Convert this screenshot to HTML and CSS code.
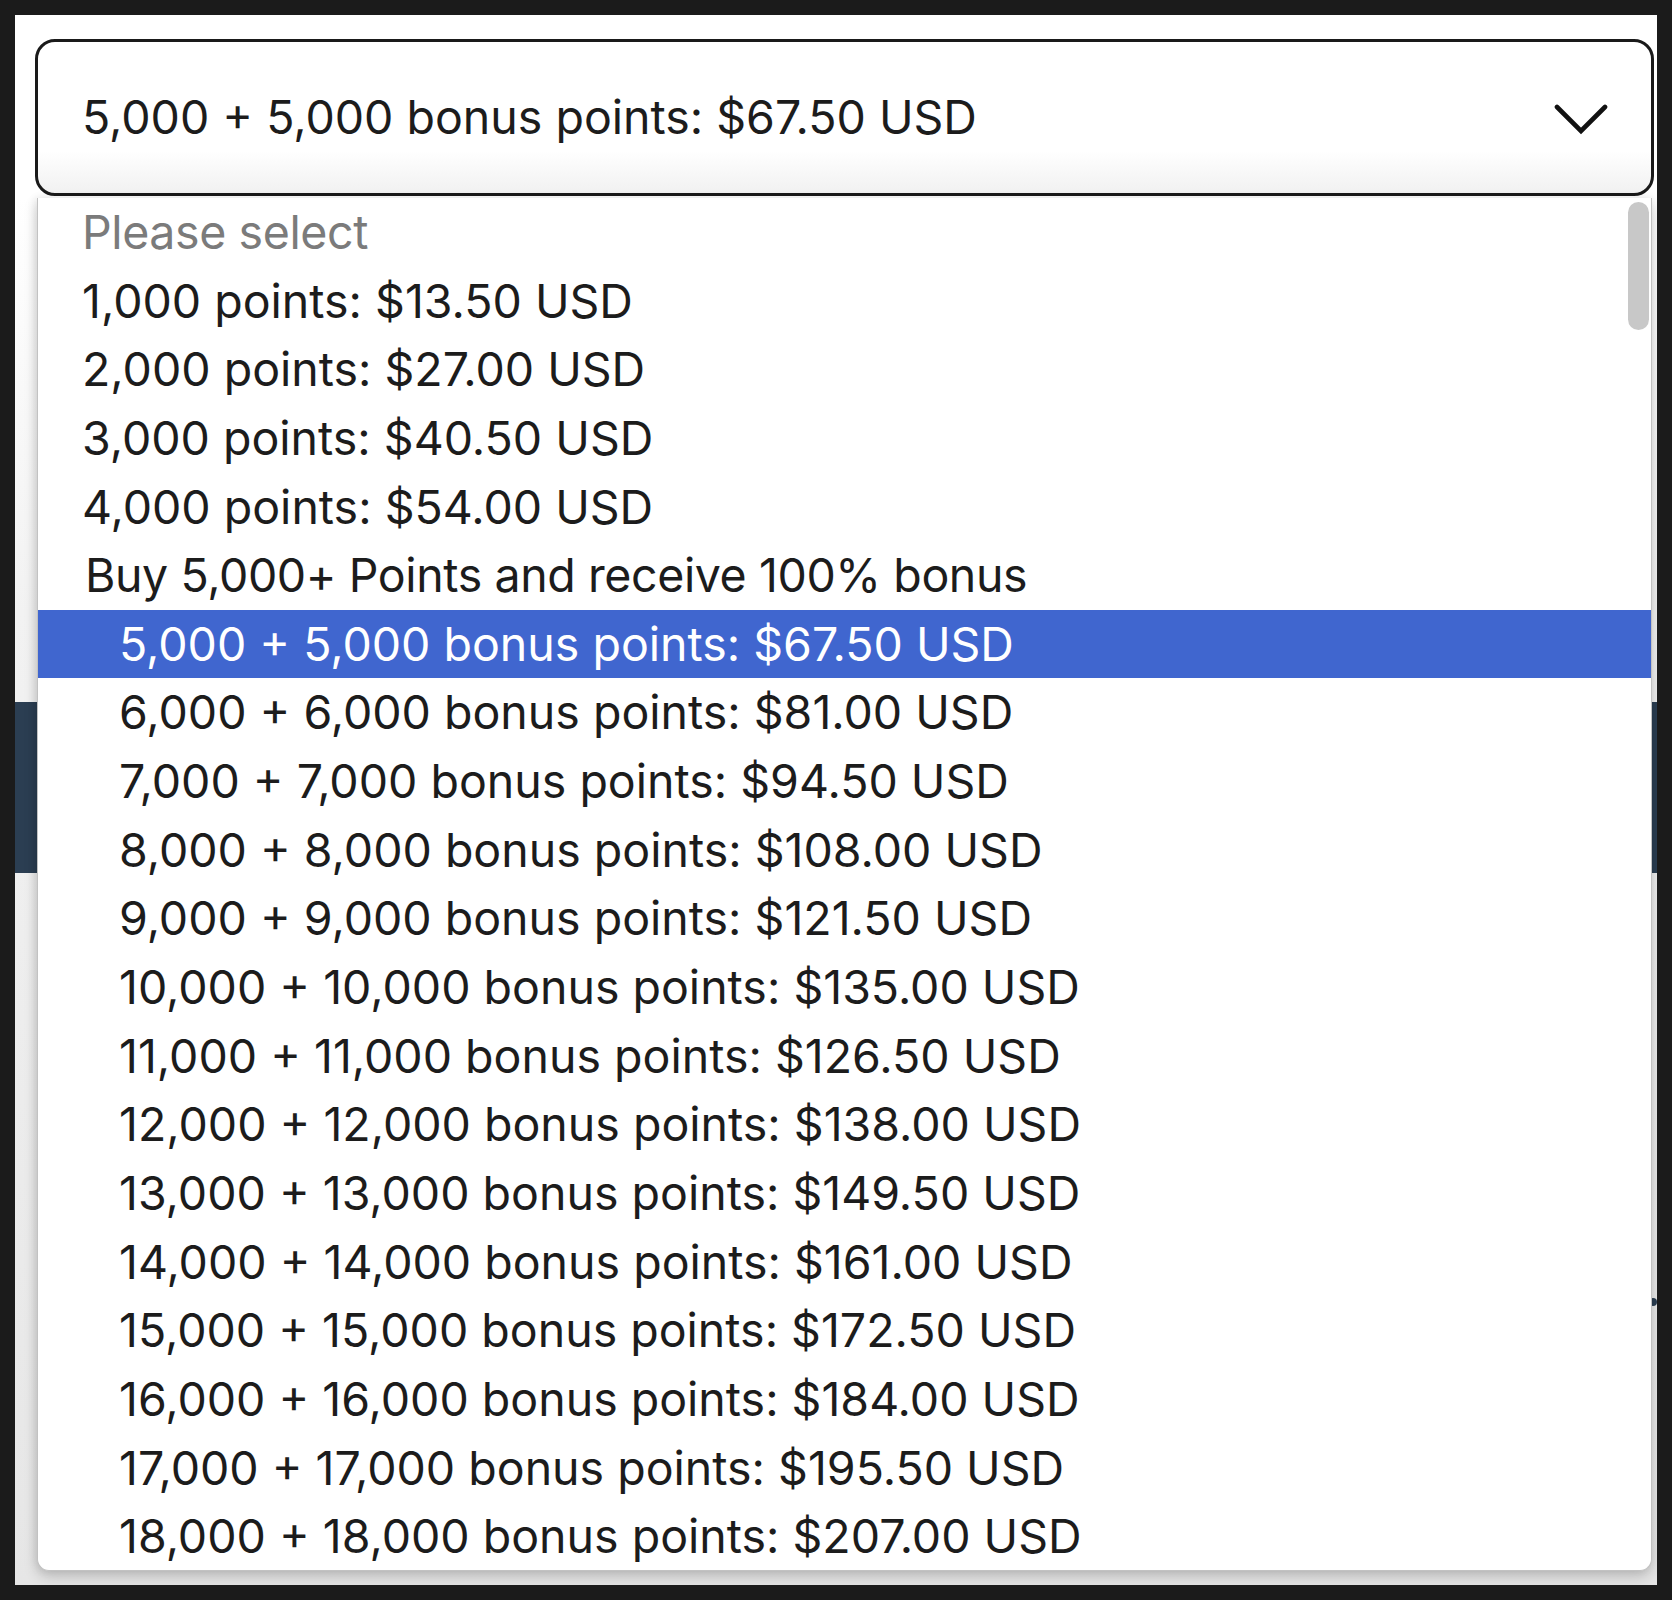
FILE: index.html
```html
<!DOCTYPE html>
<html lang="en">
<head>
<meta charset="utf-8">
<title>Points selector</title>
<link rel="stylesheet" href="styles.css">
</head>
<body>
<div class="frame">
  <div class="page">
    <div class="select-box">
      <span class="select-value">5,000 + 5,000 bonus points: $67.50 USD</span>
      <svg class="chevron" width="54" height="32" viewBox="0 0 54 32" aria-hidden="true">
        <polyline points="3,4 27,28 51,4" fill="none" stroke="#111" stroke-width="4.6" stroke-linecap="round" stroke-linejoin="miter"/>
      </svg>
    </div>
    <div class="under">
      <div class="band"></div>
      <div class="under-rest">
        <span class="dot"></span>
      </div>
    </div>

    <div class="menu">
      <div class="opt placeholder">Please select</div>
      <div class="opt">1,000 points: $13.50 USD</div>
      <div class="opt">2,000 points: $27.00 USD</div>
      <div class="opt">3,000 points: $40.50 USD</div>
      <div class="opt">4,000 points: $54.00 USD</div>
      <div class="opt group">Buy 5,000+ Points and receive 100% bonus</div>
      <div class="opt sub selected">5,000 + 5,000 bonus points: $67.50 USD</div>
      <div class="opt sub">6,000 + 6,000 bonus points: $81.00 USD</div>
      <div class="opt sub">7,000 + 7,000 bonus points: $94.50 USD</div>
      <div class="opt sub">8,000 + 8,000 bonus points: $108.00 USD</div>
      <div class="opt sub">9,000 + 9,000 bonus points: $121.50 USD</div>
      <div class="opt sub">10,000 + 10,000 bonus points: $135.00 USD</div>
      <div class="opt sub">11,000 + 11,000 bonus points: $126.50 USD</div>
      <div class="opt sub">12,000 + 12,000 bonus points: $138.00 USD</div>
      <div class="opt sub">13,000 + 13,000 bonus points: $149.50 USD</div>
      <div class="opt sub">14,000 + 14,000 bonus points: $161.00 USD</div>
      <div class="opt sub">15,000 + 15,000 bonus points: $172.50 USD</div>
      <div class="opt sub">16,000 + 16,000 bonus points: $184.00 USD</div>
      <div class="opt sub">17,000 + 17,000 bonus points: $195.50 USD</div>
      <div class="opt sub">18,000 + 18,000 bonus points: $207.00 USD</div>
      <div class="thumb"></div>
    </div>
  </div>
</div>
</body>
</html>
```

FILE: styles.css
```css
* { box-sizing: border-box; }

html, body {
  margin: 0;
  padding: 0;
}

body {
  background: #1b1b1b;
  font-family: Inter, "Liberation Sans", sans-serif;
  color: #1c1c1c;
}

.frame {
  width: 1672px;
  height: 1600px;
  padding: 15px;
}

.page {
  position: relative;
  width: 1642px;
  height: 1570px;
  background: #ffffff;
  padding: 24px 3px 0 20px;
  display: flex;
  flex-direction: column;
  overflow: hidden;
}

.select-box {
  height: 157px;
  border: 3.5px solid #1a1a1a;
  border-radius: 20px;
  background: linear-gradient(to bottom, #ffffff 0%, #ffffff 72%, #f1f1f1 100%);
  display: flex;
  align-items: center;
  justify-content: space-between;
  padding: 0 43px 0 44px;
  font-size: 46.5px;
  line-height: 1;
}

.select-value {
  color: #1c1c1c;
}

.chevron {
  display: block;
  margin-top: 2px;
}

.under {
  flex: 1;
  margin: 0 -3px 0 -20px;
  display: flex;
  flex-direction: column;
  background: linear-gradient(to bottom, #ffffff 0%, #f2f2f2 30%, #e6e6e6 100%);
}

.band {
  margin-top: 506px;
  height: 171px;
  background: #2b3e52;
}

.under-rest {
  flex: 1;
  position: relative;
}

.dot {
  position: absolute;
  right: 0;
  top: 425px;
  width: 8px;
  height: 8px;
  border-radius: 50%;
  background: #2b3e52;
}

.menu {
  position: absolute;
  left: 22px;
  top: 183px;
  width: 1615px;
  height: 1373px;
  background: #ffffff;
  border-radius: 0 0 12px 12px;
  border: 1px solid #c2c2c2;
  border-top: none;
  box-shadow: 0 6px 14px rgba(0, 0, 0, 0.18), -2px 0 8px rgba(0, 0, 0, 0.08);
  overflow: hidden;
  font-size: 46.5px;
}

.opt {
  height: 68.65px;
  line-height: 68.65px;
  padding-left: 44px;
  white-space: nowrap;
  color: #1c1c1c;
}

.opt.placeholder {
  color: #7b7b7b;
  letter-spacing: -0.4px;
}

.opt.group {
  padding-left: 47px;
  letter-spacing: -0.4px;
}

.opt.sub {
  padding-left: 81px;
}

.opt.selected {
  background: #4066cf;
  color: #ffffff;
}

.thumb {
  position: absolute;
  left: 1590px;
  top: 4px;
  width: 21px;
  height: 128px;
  border-radius: 11px;
  background: #c8c8c8;
}
```
